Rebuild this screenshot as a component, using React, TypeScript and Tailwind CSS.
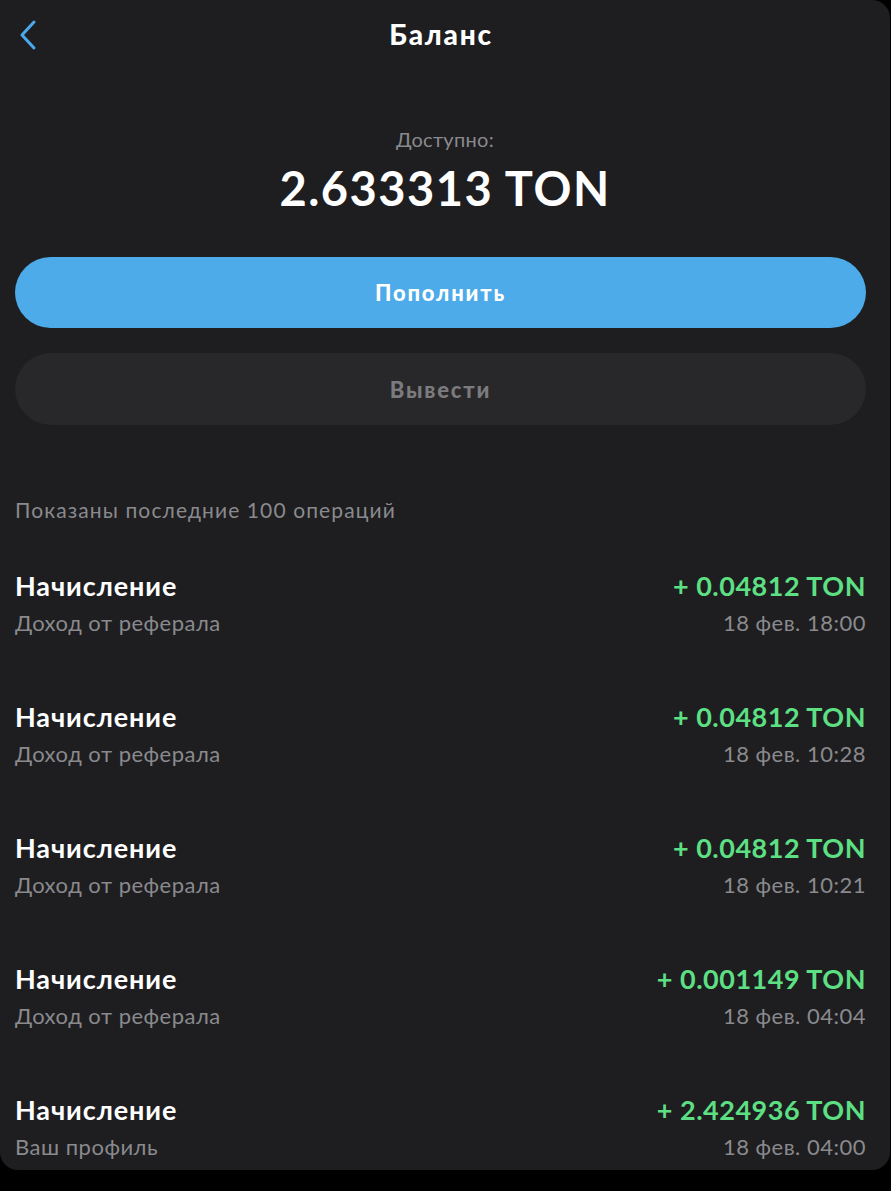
const OPS = [
  { title: "Начисление", sub: "Доход от реферала", amount: "+ 0.04812 TON", date: "18 фев. 18:00" },
  { title: "Начисление", sub: "Доход от реферала", amount: "+ 0.04812 TON", date: "18 фев. 10:28" },
  { title: "Начисление", sub: "Доход от реферала", amount: "+ 0.04812 TON", date: "18 фев. 10:21" },
  { title: "Начисление", sub: "Доход от реферала", amount: "+ 0.001149 TON", date: "18 фев. 04:04" },
  { title: "Начисление", sub: "Ваш профиль", amount: "+ 2.424936 TON", date: "18 фев. 04:00" },
];

export default function App() {
  return (
    <div className="min-h-[1191px] bg-black" style={{ fontFamily: "Lato, 'Noto Sans', sans-serif" }}>
      <div className="w-[890px] h-[1170px] bg-[#1e1e20] rounded-b-[18px] rounded-tr-[18px] overflow-hidden">
        {/* Header */}
        <div className="relative h-[68px] flex items-center justify-center">
          <button className="absolute left-[18px] top-[19px] text-[#4aa8ec]">
            <svg width="20" height="32" viewBox="0 0 20 32" fill="none">
              <path d="M16 3 L4 16 L16 29" stroke="currentColor" strokeWidth="3" strokeLinecap="round" strokeLinejoin="round" />
            </svg>
          </button>
          <h1 className="text-[28px] font-black text-white tracking-[1.8px] -ml-[8px]">Баланс</h1>
        </div>

        {/* Balance */}
        <div className="flex flex-col items-center mt-[57px]">
          <div className="text-[20px] text-[#8a8a8e] leading-[28px] tracking-[0.3px]">Доступно:</div>
          <div className="text-[47px] font-bold text-white leading-[56px] mt-[7px] tracking-[1.5px]">2.633313 TON</div>
        </div>

        {/* Buttons */}
        <div className="px-[15px] mt-[41px] w-[881px] flex flex-col gap-[25px]">
          <button className="h-[71px] rounded-full bg-[#4dabea] text-white text-[22px] font-black tracking-[1.8px]">Пополнить</button>
          <button className="h-[72px] rounded-full bg-[#28282a] text-[#7b7b7e] text-[22px] font-black tracking-[1.8px]">Вывести</button>
        </div>

        {/* Operations */}
        <div className="px-[15px] w-[881px] mt-[70px]">
          <div className="text-[21px] text-[#8a8a8e] leading-[30px] tracking-[1.1px]">Показаны последние 100 операций</div>
          <div className="flex flex-col mt-[45px] gap-[58px]">
            {OPS.map((op, i) => (
              <div key={i} className="flex justify-between">
                <div className="flex flex-col">
                  <div className="text-[27px] font-bold text-white leading-[32px] tracking-[0.9px]">{op.title}</div>
                  <div className="text-[22px] text-[#8a8a8e] leading-[40px] mt-[1px] tracking-[0.5px]">{op.sub}</div>
                </div>
                <div className="flex flex-col items-end">
                  <div className="text-[27px] font-bold text-[#5ddf83] leading-[32px] tracking-[0.5px]">{op.amount}</div>
                  <div className="text-[22px] text-[#8a8a8e] leading-[40px] mt-[1px] tracking-[0.5px]">{op.date}</div>
                </div>
              </div>
            ))}
          </div>
        </div>
      </div>
    </div>
  );
}
